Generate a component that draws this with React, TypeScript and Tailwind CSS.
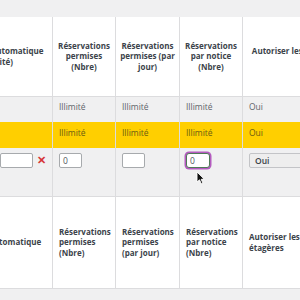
import { ReactNode } from "react";

const cols = "grid grid-cols-[113px_63px_64px_63px_150px]";
const cell = "border-r border-[#dcdcde] px-[6px]";

function Cursor() {
    return (
        <svg
            width="9"
            height="14"
            viewBox="0 0 9 14"
            className="pointer-events-none absolute left-[196px] top-[171px]"
        >
            <path
                d="M1 1 L1 11 L3.5 8.8 L5.3 12.8 L6.9 12.1 L5.2 8.3 L8.2 8.1 Z"
                fill="#111"
                stroke="#fff"
                strokeWidth="0.9"
                strokeLinejoin="round"
            />
        </svg>
    );
}

function HeadCell({ children, center }: { children: ReactNode; center?: boolean }) {
    return (
        <div
            className={`${cell} flex items-center ${center ? "justify-center text-center" : "justify-start text-left"} whitespace-nowrap font-bold text-[#3c434a]`}
        >
            <div>{children}</div>
        </div>
    );
}

function HeaderRow({ center }: { center?: boolean }) {
    return (
        <div className={`${cols} ${center ? "h-[79px]" : "h-[91px]"} bg-white`}>
            {center ?
                <HeadCell center>
                    Validation automatique
                    <br />
                    (Illimité)
                </HeadCell>
            :   <HeadCell>Validation automatique</HeadCell>}
            <HeadCell center={center}>
                Réservations
                <br />
                permises
                <br />
                (Nbre)
            </HeadCell>
            {center ?
                <HeadCell center>
                    Réservations
                    <br />
                    permises (par
                    <br />
                    jour)
                </HeadCell>
            :   <HeadCell>
                    Réservations
                    <br />
                    permises
                    <br />
                    (par jour)
                </HeadCell>
            }
            <HeadCell center={center}>
                Réservations
                <br />
                par notice
                <br />
                (Nbre)
            </HeadCell>
            {center ?
                <HeadCell center>
                    Autoriser les réservations sur les
                    <br />
                    étagères
                </HeadCell>
            :   <HeadCell>
                    Autoriser les
                    <br />
                    étagères
                </HeadCell>
            }
        </div>
    );
}

function DataRow({ yellow }: { yellow?: boolean }) {
    const bg = yellow ? "bg-[#ffcf00] text-[#6b5d12]" : "bg-[#f0f0f1] text-[#5f646a]";
    const pad = yellow ? "pt-[6px] h-[26px]" : "pt-[5px] h-[25px]";
    return (
        <div className={`${cols} ${bg} text-[8.5px]`}>
            <div className={`${cell} ${pad}`}></div>
            <div className={`${cell} ${pad}`}>Illimité</div>
            <div className={`${cell} ${pad}`}>Illimité</div>
            <div className={`${cell} ${pad}`}>Illimité</div>
            <div className={`${cell} ${pad}`}>Oui</div>
        </div>
    );
}

function EditRow() {
    const input =
        "h-[15px] w-[23px] rounded-[2px] border border-[#a7aaad] bg-white px-[3px] leading-[13px] text-[#50575e]";
    return (
        <div className={`${cols} h-[49px] border-b border-[#dcdcde] bg-[#f0f0f1] text-[8.5px]`}>
            <div className={`${cell} flex items-start gap-[4px] pt-[5px]`}>
                <div className="ml-[54px] h-[15px] w-[38px] rounded-[2px] border border-[#a7aaad] bg-white" />
                <span className="mt-[1px] text-[11px] font-bold leading-[11px] text-[#d63638]">
                    ✕
                </span>
            </div>
            <div className={`${cell} pt-[5px]`}>
                <div className={input}>0</div>
            </div>
            <div className={`${cell} pt-[5px]`}>
                <div className={input}></div>
            </div>
            <div className={`${cell} pt-[5px]`}>
                <div className="h-[15px] w-[24px] rounded-[3px] border border-[#4f7a57] bg-white px-[3px] leading-[13px] text-[#50575e] shadow-[0_0_0_1.5px_#b45bbf]">
                    0
                </div>
            </div>
            <div className={`${cell} pt-[5px]`}>
                <div className="h-[15px] w-[80px] rounded-[2px] border border-[#c3c4c7] bg-[#eeeeee] px-[5px] leading-[13px] font-semibold text-[#3c434a]">
                    Oui
                </div>
            </div>
        </div>
    );
}

export default function App() {
    return (
        <div className="relative h-[300px] w-[300px] overflow-hidden bg-[#f0f0f1] font-['Open_Sans',sans-serif] text-[8px] leading-[10.5px]">
            <div className="h-[17px]" />
            <div className="-ml-[60px] w-[453px]">
                <div className="border-b border-[#dcdcde]">
                    <HeaderRow center />
                </div>
                <DataRow />
                <DataRow yellow />
                <EditRow />
                <div className="border-b border-[#dcdcde]">
                    <HeaderRow />
                </div>
            </div>
            <Cursor />
        </div>
    );
}
